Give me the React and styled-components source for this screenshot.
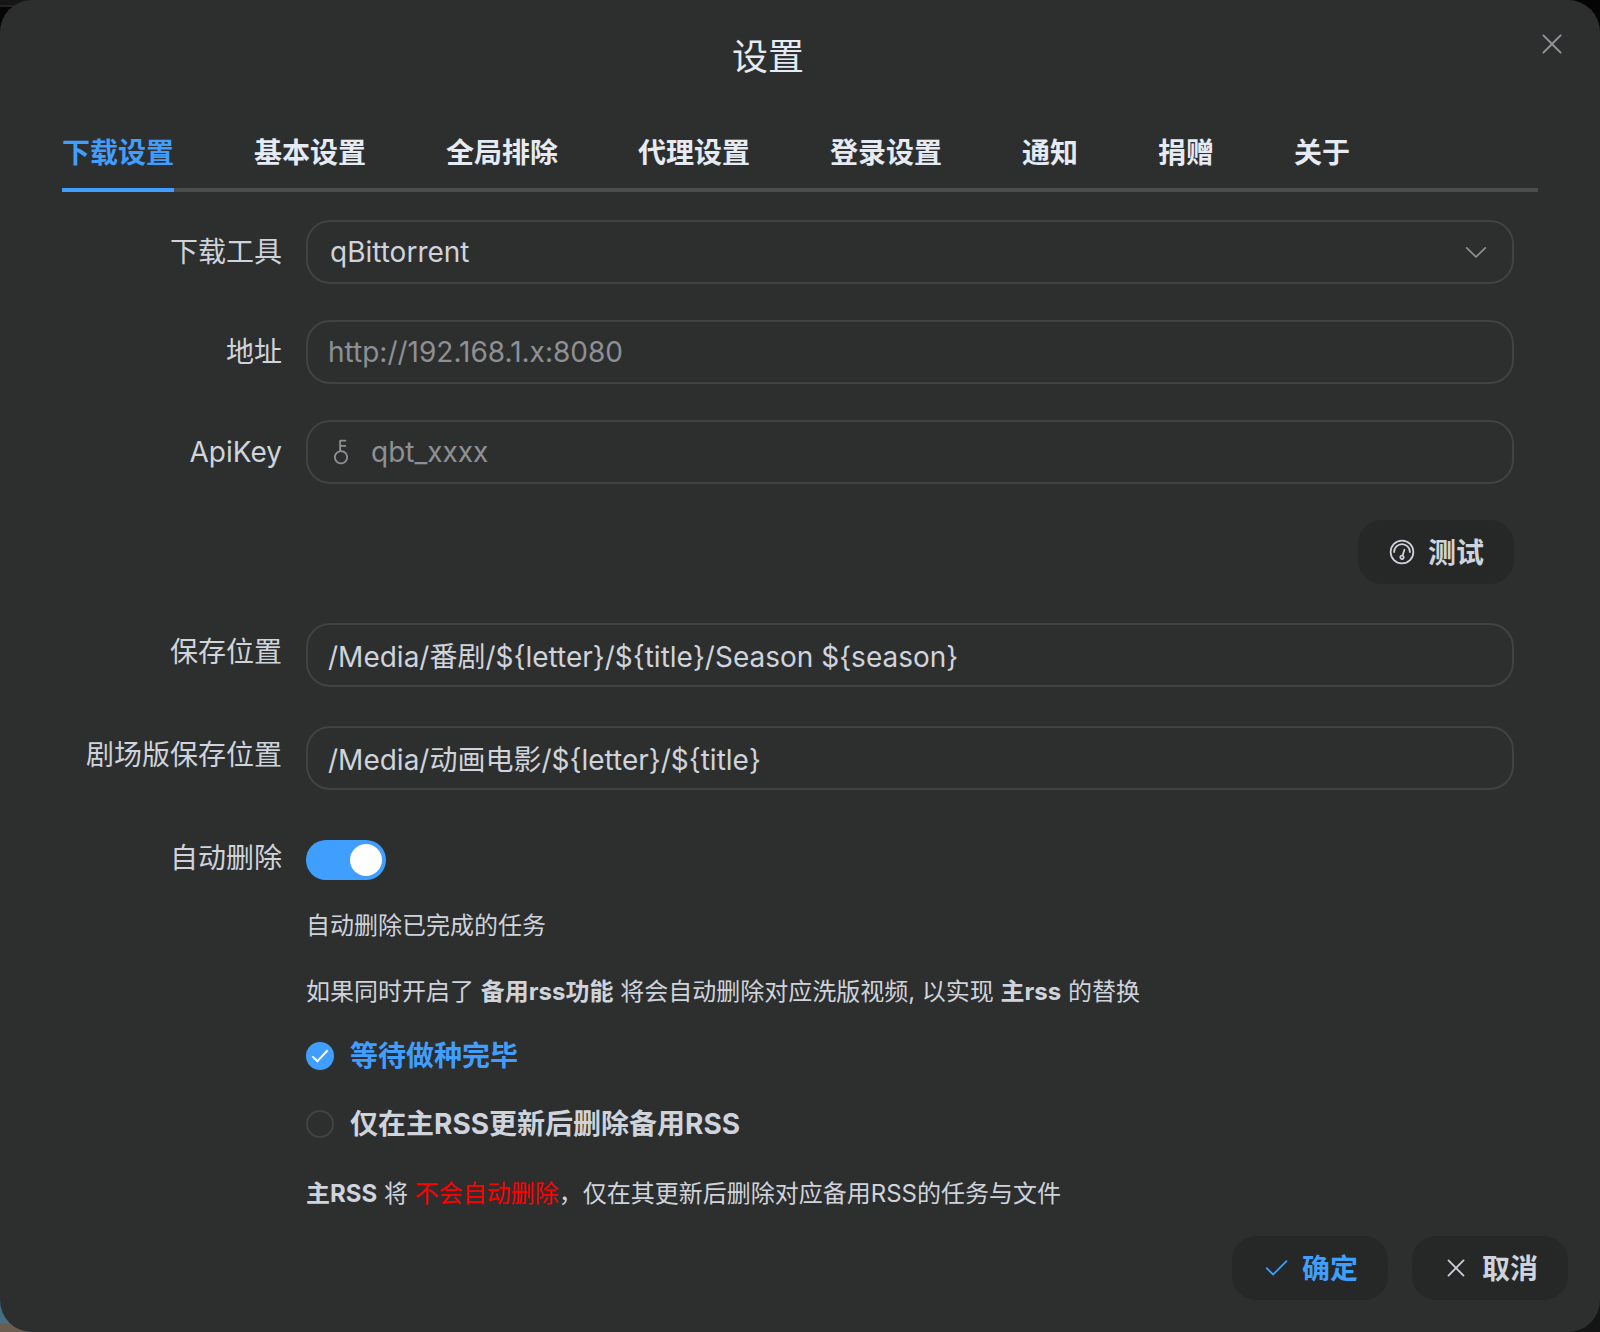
import React, { useState } from "react";
import styled, { createGlobalStyle, css } from "styled-components";

const color = {
  panel: "#2d2f2e",
  sunken: "#262827",
  line: "#414243",
  rule: "#4c4d4f",
  title: "#e5eaf3",
  text: "#cfd3dc",
  muted: "#8d9095",
  accent: "#409eff",
  danger: "#ff0000",
};

const GlobalStyle = createGlobalStyle`
  *, *::before, *::after { box-sizing: border-box; }
  body {
    margin: 0;
    color: ${color.text};
    background:
      linear-gradient(#161616 0 5px, #242424 5px 7px, transparent 7px) 0 0 / 50% 8px no-repeat,
      linear-gradient(#1f6f95, #4b6f80 80%, #6b5d50 84%) 0 100% / 64px 48px no-repeat,
      linear-gradient(#050505, #151515);
    font-family: Inter, "Noto Sans CJK SC", sans-serif;
    font-size: 28px;
  }
  button, input, select { font: inherit; color: inherit; }
`;

const Dialog = styled.main`
  min-height: 100vh;
  display: flex;
  flex-direction: column;
  background: ${color.panel};
  border-radius: 32px;
`;

const Header = styled.header`
  display: flex;
  align-items: flex-start;
  padding: 28px 32px 26px 0;
`;

const Title = styled.h1`
  flex: 1;
  margin: 0;
  font-size: 36px;
  line-height: 58px;
  font-weight: 400;
  text-align: center;
  color: ${color.title};
`;

const CloseButton = styled.button`
  display: flex;
  padding: 0;
  border: 0;
  background: none;
  color: #909399;
  cursor: pointer;
`;

const Glyph = styled.svg`
  width: ${(p) => p.$size || 28}px;
  height: ${(p) => p.$size || 28}px;
  flex: none;
  fill: currentColor;
`;

const Body = styled.div`
  padding: 0 62px;
`;

const TabBar = styled.div`
  display: flex;
  gap: 80px;
  box-shadow: inset 0 -4px ${color.rule};
`;

const Tab = styled.button`
  height: 80px;
  padding: 0 0 2px;
  border: 0;
  background: none;
  font-weight: 700;
  white-space: nowrap;
  color: ${(p) => (p.$active ? color.accent : color.title)};
  box-shadow: ${(p) => (p.$active ? `inset 0 -4px ${color.accent}` : "none")};
  cursor: pointer;
`;

const Form = styled.form`
  display: flex;
  flex-direction: column;
  gap: 36px;
  padding: 28px 24px 0;
`;

const Row = styled.div`
  display: grid;
  grid-template-columns: 196px minmax(0, 1fr);
  column-gap: 24px;
`;

const Label = styled.label`
  line-height: 64px;
  text-align: right;
  white-space: nowrap;
`;

const Content = styled.div`
  padding-top: ${(p) => p.$top || 0}px;
`;

const field = css`
  width: 100%;
  height: 64px;
  border: 2px solid ${color.line};
  border-radius: 24px;
  background: transparent;
  outline: 0;
`;

const TextInput = styled.input`
  ${field}
  display: block;
  padding: 0 20px;
  &::placeholder { color: ${color.muted}; opacity: 1; }
`;

const IconField = styled.div`
  ${field}
  display: flex;
  align-items: center;
  gap: 16px;
  padding: 0 20px 0 19px;
  color: ${color.muted};
`;

const BareInput = styled.input`
  flex: 1;
  min-width: 0;
  padding: 0;
  border: 0;
  outline: 0;
  background: none;
  &::placeholder { color: ${color.muted}; opacity: 1; }
`;

const SelectField = styled.div`
  display: grid;
  align-items: center;
  & > * { grid-area: 1 / 1; }
  & > svg {
    justify-self: end;
    margin-right: 24px;
    color: ${color.muted};
    pointer-events: none;
  }
`;

const Select = styled.select`
  ${field}
  appearance: none;
  padding: 0 64px 0 22px;
`;

const Actions = styled.div`
  display: flex;
  justify-content: flex-end;
  gap: 24px;
  padding: ${(p) => (p.$footer ? "22px 32px 32px" : "0")};
`;

const Button = styled.button`
  display: flex;
  align-items: center;
  gap: 12px;
  height: 64px;
  padding: 0 30px;
  border: 0;
  border-radius: 24px;
  background: ${color.sunken};
  color: ${(p) => (p.$primary ? color.accent : color.text)};
  font-weight: 700;
  white-space: nowrap;
  cursor: pointer;
`;

const ButtonText = styled.span`
  padding-bottom: 2px;
`;

const Switch = styled.input`
  appearance: none;
  display: block;
  width: 80px;
  height: 40px;
  margin: 0;
  padding: 4px;
  border-radius: 20px;
  background: ${color.rule};
  cursor: pointer;
  &::before {
    content: "";
    display: block;
    width: 32px;
    height: 32px;
    border-radius: 50%;
    background: #fff;
  }
  &:checked { background: ${color.accent}; }
  &:checked::before { margin-left: 40px; }
`;

const Tip = styled.p`
  margin: ${(p) => (p.$wide ? 30 : 26)}px 0 0;
  font-size: 24px;
  line-height: 40px;
`;

const Warning = styled.span`
  color: ${color.danger};
`;

const Choice = styled.label`
  display: flex;
  align-items: center;
  gap: 16px;
  width: max-content;
  max-width: 100%;
  margin-top: ${(p) => (p.$first ? 24 : 28)}px;
  line-height: 40px;
  font-weight: 700;
  color: ${(p) => (p.$on ? color.accent : color.text)};
  cursor: pointer;
`;

const CheckBox = styled.input`
  appearance: none;
  display: grid;
  place-items: center;
  flex: none;
  width: 28px;
  height: 28px;
  margin: 0;
  border: 2px solid ${color.line};
  border-radius: 50%;
  &:checked {
    border-color: ${color.accent};
    background: ${color.accent};
  }
  &:checked::after {
    content: "";
    width: 8px;
    height: 16px;
    margin-bottom: 4px;
    border: solid #fff;
    border-width: 0 2px 2px 0;
    transform: rotate(43deg);
  }
`;

const shapes = {
  close: [
    "M764.288 214.592 512 466.88 259.712 214.592a31.936 31.936 0 0 0-45.12 45.12L466.752 512 214.528 764.224a31.936 31.936 0 1 0 45.12 45.184L512 557.184l252.288 252.288a31.936 31.936 0 0 0 45.12-45.12L557.12 512.064l252.288-252.352a31.936 31.936 0 1 0-45.12-45.184z",
  ],
  down: [
    "M831.872 340.864 512 652.672 192.128 340.864a30.592 30.592 0 0 0-42.752 0 29.12 29.12 0 0 0 0 41.6L489.664 714.24a32 32 0 0 0 44.672 0l340.288-331.712a29.12 29.12 0 0 0 0-41.728 30.592 30.592 0 0 0-42.752 0z",
  ],
  check: [
    "M406.656 706.944 195.84 496.256a32 32 0 1 0-45.248 45.248l256 256 512-512a32 32 0 0 0-45.248-45.248L406.592 706.944z",
  ],
  key: [
    "M448 456.064V96a32 32 0 0 1 32-32L672 64a32 32 0 0 1 0 64H512v128h160a32 32 0 0 1 0 64H512v128a256 256 0 1 1-64 8.064M512 896a192 192 0 1 0 0-384 192 192 0 0 0 0 384",
  ],
  meter: [
    "M512 896a384 384 0 1 0 0-768 384 384 0 0 0 0 768m0 64a448 448 0 1 1 0-896 448 448 0 0 1 0 896",
    "M192 512a320 320 0 1 1 640 0 32 32 0 1 1-64 0 256 256 0 1 0-512 0 32 32 0 0 1-64 0",
    "M570.432 627.84A96 96 0 1 1 509.568 608l60.992-187.776A32 32 0 1 1 631.424 440l-60.992 187.776zM502.08 734.464a32 32 0 1 0 19.84-60.928 32 32 0 0 0-19.84 60.928",
  ],
};

function Icon({ name, size }) {
  return (
    <Glyph viewBox="0 0 1024 1024" $size={size} aria-hidden="true">
      {shapes[name].map((d) => (
        <path key={d} d={d} />
      ))}
    </Glyph>
  );
}

const tabs = ["下载设置", "基本设置", "全局排除", "代理设置", "登录设置", "通知", "捐赠", "关于"];

export default function App() {
  const [tab, setTab] = useState(tabs[0]);
  const [autoDelete, setAutoDelete] = useState(true);
  const [waitSeed, setWaitSeed] = useState(true);
  const [onlyBackup, setOnlyBackup] = useState(false);

  return (
    <>
      <GlobalStyle />
      <Dialog>
        <Header>
          <Title>设置</Title>
          <CloseButton type="button" aria-label="关闭">
            <Icon name="close" size={32} />
          </CloseButton>
        </Header>

        <Body>
          <TabBar role="tablist">
            {tabs.map((name) => (
              <Tab
                key={name}
                type="button"
                role="tab"
                aria-selected={name === tab}
                $active={name === tab}
                onClick={() => setTab(name)}
              >
                {name}
              </Tab>
            ))}
          </TabBar>

          <Form onSubmit={(e) => e.preventDefault()}>
            <Row>
              <Label htmlFor="tool">下载工具</Label>
              <SelectField>
                <Select id="tool" defaultValue="qBittorrent">
                  <option>qBittorrent</option>
                </Select>
                <Icon name="down" />
              </SelectField>
            </Row>
            <Row>
              <Label htmlFor="host">地址</Label>
              <TextInput id="host" placeholder="http://192.168.1.x:8080" />
            </Row>
            <Row>
              <Label htmlFor="key">ApiKey</Label>
              <IconField>
                <Icon name="key" />
                <BareInput id="key" placeholder="qbt_xxxx" />
              </IconField>
            </Row>
            <Actions>
              <Button type="button">
                <Icon name="meter" />
                <ButtonText>测试</ButtonText>
              </Button>
            </Actions>
            <Row>
              <Label htmlFor="path">保存位置</Label>
              <Content $top={3}>
                <TextInput id="path" defaultValue={"/Media/番剧/${letter}/${title}/Season ${season}"} />
              </Content>
            </Row>
            <Row>
              <Label htmlFor="movie-path">剧场版保存位置</Label>
              <Content $top={3}>
                <TextInput id="movie-path" defaultValue={"/Media/动画电影/${letter}/${title}"} />
              </Content>
            </Row>
            <Row>
              <Label htmlFor="auto-delete">自动删除</Label>
              <Content $top={14}>
                <Switch
                  id="auto-delete"
                  type="checkbox"
                  role="switch"
                  checked={autoDelete}
                  onChange={(e) => setAutoDelete(e.target.checked)}
                />
                <Tip>自动删除已完成的任务</Tip>
                <Tip>
                  如果同时开启了 <strong>备用rss功能</strong> 将会自动删除对应洗版视频, 以实现 <strong>主rss</strong> 的替换
                </Tip>
                <Choice $first $on={waitSeed}>
                  <CheckBox
                    type="checkbox"
                    checked={waitSeed}
                    onChange={(e) => setWaitSeed(e.target.checked)}
                  />
                  等待做种完毕
                </Choice>
                <Choice $on={onlyBackup}>
                  <CheckBox
                    type="checkbox"
                    checked={onlyBackup}
                    onChange={(e) => setOnlyBackup(e.target.checked)}
                  />
                  仅在主RSS更新后删除备用RSS
                </Choice>
                <Tip $wide>
                  <strong>主RSS</strong> 将 <Warning>不会自动删除</Warning>，仅在其更新后删除对应备用RSS的任务与文件
                </Tip>
              </Content>
            </Row>
          </Form>
        </Body>

        <Actions as="footer" $footer>
          <Button type="button" $primary>
            <Icon name="check" />
            <ButtonText>确定</ButtonText>
          </Button>
          <Button type="button">
            <Icon name="close" />
            <ButtonText>取消</ButtonText>
          </Button>
        </Actions>
      </Dialog>
    </>
  );
}
